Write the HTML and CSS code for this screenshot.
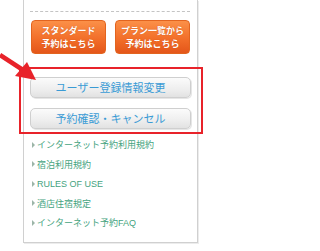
FILE: index.html
```html
<!DOCTYPE html>
<html lang="ja">
<head>
<meta charset="utf-8">
<link rel="stylesheet" href="styles.css">
</head>
<body>
<div class="panel">
  <div class="sep"></div>
  <div class="cta-row">
    <a class="cta">スタンダード<br>予約はこちら</a>
    <a class="cta">プラン一覧から<br>予約はこちら</a>
  </div>
  <div class="member">
    <a class="gbtn">ユーザー登録情報変更</a>
    <a class="gbtn">予約確認・キャンセル</a>
  </div>
  <ul class="links">
    <li><span class="tri"></span>インターネット予約利用規約</li>
    <li><span class="tri"></span>宿泊利用規約</li>
    <li><span class="tri"></span>RULES OF USE</li>
    <li><span class="tri"></span>酒店住宿規定</li>
    <li><span class="tri"></span>インターネット予約FAQ</li>
  </ul>
</div>
<div class="highlight"></div>
<svg class="arrow" width="40" height="40" viewBox="0 50 40 40">
  <line x1="0" y1="55" x2="23" y2="70" stroke="#e8232a" stroke-width="4.5"/>
  <polygon points="36,80 15,76 27,62" fill="#e8232a"/>
</svg>
</body>
</html>
```

FILE: styles.css
```css
html, body {
  margin: 0;
  padding: 0;
  background: #fff;
}
body {
  position: relative;
  width: 212px;
  height: 251px;
  overflow: hidden;
  font-family: "Liberation Sans", "Noto Sans CJK JP", sans-serif;
}
.panel {
  box-sizing: border-box;
  width: 175px;
  margin-left: 23px;
  border: 1px solid #d0d0d0;
  border-top: none;
  box-shadow: 1px 1px 0 #ececec;
  padding: 11px 0 9px;
  background: #fff;
}
.sep {
  margin: 0 7px 0 6px;
  border-top: 1px dashed #c4c4c4;
}
.cta-row {
  display: flex;
  gap: 9px;
  margin-top: 8px;
  padding-left: 7px;
}
.cta {
  box-sizing: border-box;
  width: 75px;
  height: 34px;
  padding-top: 3px;
  border-radius: 4px;
  border: 1px solid #e2641f;
  background: linear-gradient(#fb9048, #f26f2a 55%, #e4561a);
  color: #fff;
  font-family: "Noto Sans CJK JP", sans-serif;
  font-weight: bold;
  font-size: 9px;
  line-height: 13.2px;
  text-align: center;
  text-shadow: 0 0 1px #c94a10;
}
.member {
  display: flex;
  flex-direction: column;
  gap: 10px;
  margin-top: 23px;
  padding-left: 6px;
}
.gbtn {
  box-sizing: border-box;
  width: 161px;
  height: 21px;
  border: 1px solid #cfcfcf;
  border-radius: 5px;
  background: linear-gradient(#fbfbfb, #eeeeee 60%, #e2e2e2);
  box-shadow: 1px 1px 0 #e6e6e6;
  color: #3a9bd5;
  font-family: "Noto Sans CJK JP", sans-serif;
  font-size: 11px;
  line-height: 19px;
  text-align: center;
}
.links {
  list-style: none;
  margin: 6px 0 0;
  padding: 0 0 0 8px;
}
.links li {
  display: flex;
  align-items: center;
  gap: 2px;
  height: 19.5px;
  color: #44a37e;
  font-size: 9px;
  font-family: "Liberation Sans", "Noto Sans CJK JP", sans-serif;
}
.tri {
  width: 0;
  height: 0;
  border-top: 3px solid transparent;
  border-bottom: 3px solid transparent;
  border-left: 3px solid #9cb5a8;
}
.highlight {
  position: absolute;
  left: 19px;
  top: 67px;
  width: 184px;
  height: 67px;
  box-sizing: border-box;
  border: 2px solid #e8232a;
}
.arrow {
  position: absolute;
  left: 0;
  top: 50px;
}
```
